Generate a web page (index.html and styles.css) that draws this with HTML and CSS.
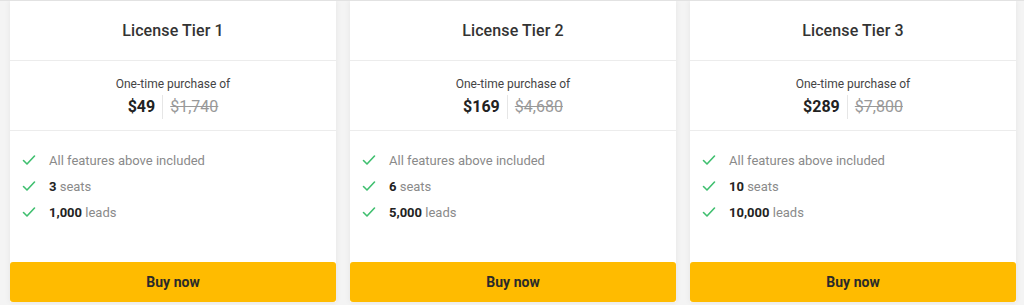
FILE: index.html
```html
<!DOCTYPE html>
<html>
<head>
<meta charset="utf-8">
<link rel="stylesheet" href="styles.css">
</head>
<body>
<div class="row">
  <div class="card">
    <div class="head">License Tier 1</div>
    <div class="price">
      <div class="label">One-time purchase of</div>
      <div class="amounts"><span class="now">$49</span><span class="was">$1,740</span></div>
    </div>
    <ul class="feats">
      <li><svg class="chk" viewBox="0 0 14 12"><path d="M1.5 6.5 L5 10 L12.5 2"/></svg><span>All features above included</span></li>
      <li><svg class="chk" viewBox="0 0 14 12"><path d="M1.5 6.5 L5 10 L12.5 2"/></svg><span><b>3</b> seats</span></li>
      <li><svg class="chk" viewBox="0 0 14 12"><path d="M1.5 6.5 L5 10 L12.5 2"/></svg><span><b>1,000</b> leads</span></li>
    </ul>
    <button class="buy">Buy now</button>
  </div>
  <div class="card">
    <div class="head">License Tier 2</div>
    <div class="price">
      <div class="label">One-time purchase of</div>
      <div class="amounts"><span class="now">$169</span><span class="was">$4,680</span></div>
    </div>
    <ul class="feats">
      <li><svg class="chk" viewBox="0 0 14 12"><path d="M1.5 6.5 L5 10 L12.5 2"/></svg><span>All features above included</span></li>
      <li><svg class="chk" viewBox="0 0 14 12"><path d="M1.5 6.5 L5 10 L12.5 2"/></svg><span><b>6</b> seats</span></li>
      <li><svg class="chk" viewBox="0 0 14 12"><path d="M1.5 6.5 L5 10 L12.5 2"/></svg><span><b>5,000</b> leads</span></li>
    </ul>
    <button class="buy">Buy now</button>
  </div>
  <div class="card">
    <div class="head">License Tier 3</div>
    <div class="price">
      <div class="label">One-time purchase of</div>
      <div class="amounts"><span class="now">$289</span><span class="was">$7,800</span></div>
    </div>
    <ul class="feats">
      <li><svg class="chk" viewBox="0 0 14 12"><path d="M1.5 6.5 L5 10 L12.5 2"/></svg><span>All features above included</span></li>
      <li><svg class="chk" viewBox="0 0 14 12"><path d="M1.5 6.5 L5 10 L12.5 2"/></svg><span><b>10</b> seats</span></li>
      <li><svg class="chk" viewBox="0 0 14 12"><path d="M1.5 6.5 L5 10 L12.5 2"/></svg><span><b>10,000</b> leads</span></li>
    </ul>
    <button class="buy">Buy now</button>
  </div>
</div>
</body>
</html>
```
FILE: styles.css
```css
html, body {
  margin: 0;
  padding: 0;
  background: #f4f4f4;
  font-family: Roboto, "Liberation Sans", sans-serif;
}
body {
  border-top: 1px solid #e2e2e2;
  height: 304px;
  overflow: hidden;
}
.row {
  display: flex;
  gap: 14px;
  padding: 0 8px 0 10px;
}
.card {
  width: 326px;
  height: 301px;
  background: #fff;
  box-shadow: 0 0 6px rgba(0,0,0,0.07);
  display: flex;
  flex-direction: column;
}
.head {
  height: 59px;
  border-bottom: 1px solid #ececec;
  display: flex;
  align-items: center;
  justify-content: center;
  font-size: 16px;
  font-weight: 500;
  color: #333;
  letter-spacing: 0.1px;
}
.price {
  height: 70px;
  border-bottom: 1px solid #ececec;
  display: flex;
  flex-direction: column;
  align-items: center;
  padding-top: 15px;
  box-sizing: border-box;
}
.label {
  font-size: 12px;
  color: #444;
  line-height: 16px;
}
.amounts {
  display: flex;
  align-items: center;
  margin-top: 3px;
  height: 24px;
}
.now {
  font-size: 16px;
  font-weight: 700;
  color: #222;
  padding-right: 7px;
  border-right: 1px solid #e6e6e6;
  line-height: 24px;
}
.was {
  font-size: 16px;
  color: #999;
  text-decoration: line-through;
  padding-left: 7px;
  line-height: 24px;
}
.feats {
  list-style: none;
  margin: 0;
  padding: 16px 0 0 12px;
  flex: 1;
}
.feats li {
  display: flex;
  align-items: center;
  height: 26px;
  font-size: 13px;
  color: #8a8a8a;
}
.feats b {
  color: #222;
  font-weight: 700;
}
.chk {
  width: 14px;
  height: 12px;
  margin-right: 13px;
  fill: none;
  stroke: #3fbf6f;
  stroke-width: 1.6;
  stroke-linecap: round;
  stroke-linejoin: round;
}
.buy {
  height: 40px;
  border: none;
  border-radius: 3px;
  background: #ffbb00;
  color: #2a2a2a;
  font-family: Roboto, "Liberation Sans", sans-serif;
  font-size: 14px;
  font-weight: 700;
  width: 100%;
  margin: 0;
  padding: 0;
}
```
